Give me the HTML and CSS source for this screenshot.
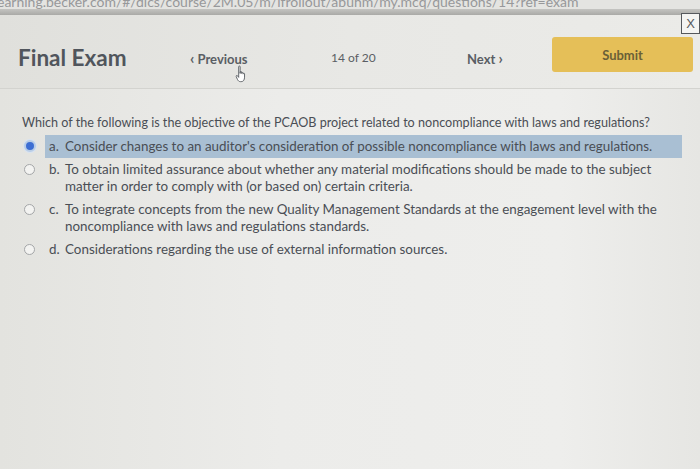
FILE: index.html
```html
<!DOCTYPE html>
<html lang="en">
<head>
    <meta charset="UTF-8">
    <title>Final Exam</title>
    <link rel="stylesheet" href="styles.css">
</head>
<body>
    <div class="urlbar"><span>earning.becker.com/#/dlcs/course/2M.05/m/ifrollout/abuhm/my.mcq/questions/14?ref=exam</span></div>
    <div class="toolbar-line"></div>
    <button class="close-btn">X</button>

    <header class="exam-header">
        <div class="title">Final Exam</div>
        <div class="nav-link prev">
            <span class="chev">&lsaquo;</span> Previous
            <svg class="cursor" width="13" height="18" viewBox="0 0 11 16">
                <path d="M3 1.5c0-.8 1.3-.8 1.3 0v6 M4.3 7.5v-1.3c0-.7 1.3-.7 1.3 0v1.5 M5.6 7.2c0-.7 1.3-.7 1.3 0v1 M6.9 7.8c0-.7 1.3-.7 1.3 0v3c0 2.5-1 4-3 4H4.6c-1.4 0-2-.7-2.7-2L.8 10.3c-.4-.8.6-1.4 1.2-.7L3 11V1.5" fill="#fff" stroke="#55595f" stroke-width=".8" stroke-linejoin="round"/>
            </svg>
        </div>
        <div class="nav-count">14 of 20</div>
        <div class="nav-link">Next <span class="chev">&rsaquo;</span></div>
        <button class="submit-btn">Submit</button>
    </header>

    <main class="question">
        <p class="question-text">Which of the following is the objective of the PCAOB project related to noncompliance with laws and regulations?</p>
        <ul class="options">
            <li class="option selected">
                <span class="radio"></span>
                <div class="option-body">
                    <span class="letter">a.</span>
                    <span class="answer">Consider changes to an auditor's consideration of possible noncompliance with laws and regulations.</span>
                </div>
            </li>
            <li class="option">
                <span class="radio"></span>
                <div class="option-body">
                    <span class="letter">b.</span>
                    <span class="answer">To obtain limited assurance about whether any material modifications should be made to the subject matter in order to comply with (or based on) certain criteria.</span>
                </div>
            </li>
            <li class="option">
                <span class="radio"></span>
                <div class="option-body">
                    <span class="letter">c.</span>
                    <span class="answer">To integrate concepts from the new Quality Management Standards at the engagement level with the noncompliance with laws and regulations standards.</span>
                </div>
            </li>
            <li class="option">
                <span class="radio"></span>
                <div class="option-body">
                    <span class="letter">d.</span>
                    <span class="answer">Considerations regarding the use of external information sources.</span>
                </div>
            </li>
        </ul>
    </main>
</body>
</html>
```

FILE: styles.css
```css
body {
    margin: 0;
    font-family: 'Lato', 'Noto Sans', sans-serif;
    background: linear-gradient(to right, #e3e3df, #ececea 40%, #eeeeec 80%, #e6e6e3);
    color: #4a4e55;
    height: 469px;
    overflow: hidden;
    position: relative;
}

.urlbar {
    height: 9px;
    overflow: hidden;
    background: #e4e4e1;
}

.urlbar span {
    display: block;
    margin-top: -6px;
    margin-left: -3px;
    font-size: 14px;
    line-height: 16px;
    color: #97989a;
    white-space: nowrap;
}

.toolbar-line {
    height: 6px;
    background: linear-gradient(#c4c4c1, #a9a9a6);
}

.close-btn {
    position: absolute;
    top: 13px;
    right: 0;
    width: 19px;
    height: 21px;
    padding: 0;
    border: 1px solid #55585c;
    background: #f4f4f2;
    color: #55585c;
    font-family: 'Liberation Sans', sans-serif;
    font-size: 13px;
    line-height: 18px;
    text-align: center;
}

/* header row: title, prev, counter, next, submit */
.exam-header {
    display: grid;
    grid-template-columns: 172px 141px 136px 85px 141px;
    align-items: start;
    height: 51px;
    padding: 22px 0 0 18px;
    border-bottom: 1px solid #d3d3cf;
    background: linear-gradient(to right, #e0e0dc, #e8e8e5 50%, #ebebe8);
}

.title {
    margin-top: 6px;
    font-size: 22.5px;
    font-weight: 700;
    line-height: 30px;
    color: #50555c;
}

.nav-link,
.nav-count {
    margin-top: 6px;
    font-size: 12px;
    line-height: 30px;
    color: #5a5e64;
}

.nav-link {
    font-size: 13px;
    font-weight: 700;
}

.chev {
    font-size: 15px;
}

.prev {
    position: relative;
}

.cursor {
    position: absolute;
    left: 45px;
    top: 22px;
}

.submit-btn {
    height: 35px;
    padding-top: 2px;
    border: none;
    border-radius: 3px;
    background: #e5bf58;
    color: #6a5f37;
    font-family: inherit;
    font-size: 13px;
    font-weight: 700;
}

.question {
    padding: 25px 0 0 22px;
}

.question-text {
    margin: 0 0 4px;
    font-size: 12.6px;
    line-height: 17px;
}

.options {
    list-style: none;
    margin: 0;
    padding: 0;
}

.option {
    display: flex;
    align-items: flex-start;
}

.radio {
    box-sizing: border-box;
    flex: none;
    width: 11px;
    height: 11px;
    margin: 6px 10px 0 2px;
    border: 1px solid #a4a6a8;
    border-radius: 50%;
    background: #f3f3f1;
}

.selected .radio {
    width: 12px;
    height: 12px;
    margin: 5px 9px 0 2px;
    border: 2px solid #b9cde6;
    background: #3d6ed3;
    box-shadow: 0 0 0 1px #d8e3f1;
}

.option-body {
    display: flex;
    width: 637px;
    box-sizing: border-box;
    padding: 3px 10px 3px 4px;
    font-size: 13.4px;
    line-height: 17px;
}

.selected .option-body {
    background: #a9bfd3;
}

.letter {
    flex: none;
    width: 16px;
}
```
